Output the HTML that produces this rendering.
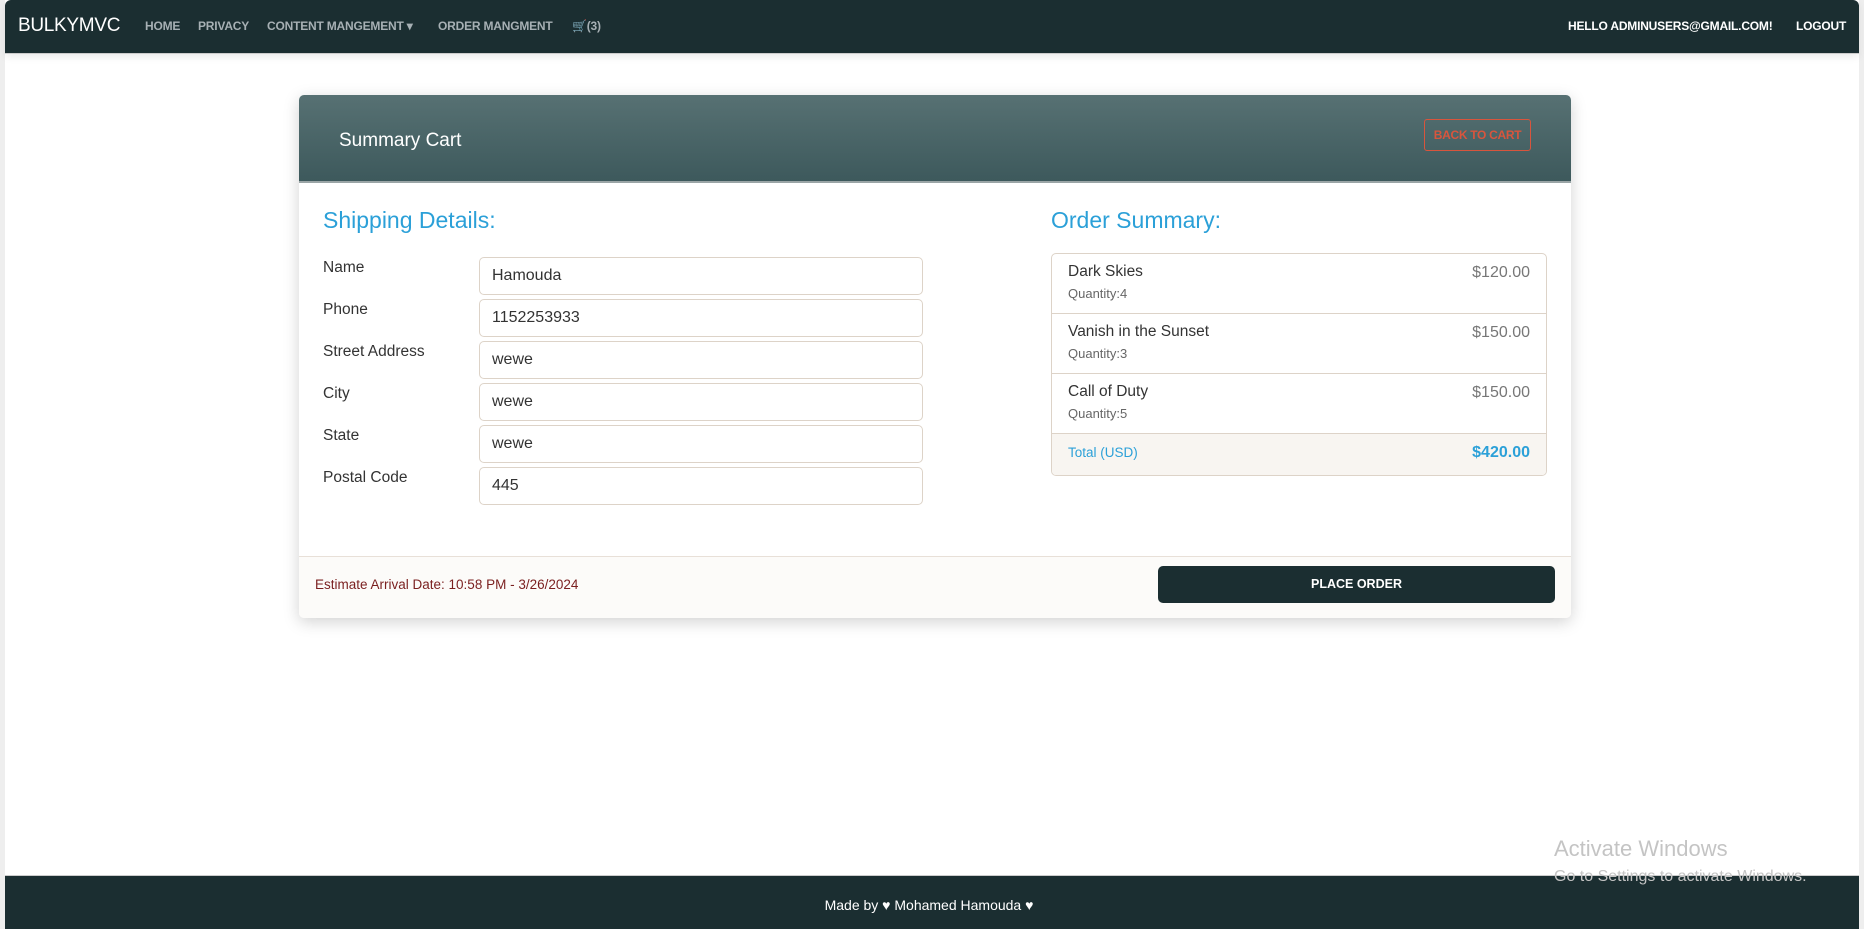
<!DOCTYPE html>
<html><head><meta charset="utf-8"><style>
*{box-sizing:border-box;margin:0;padding:0}
body{width:1864px;height:929px;background:#fff;font-family:"Liberation Sans",sans-serif;position:relative;overflow:hidden}
.edge{position:absolute;top:0;bottom:0;width:5px;background:#eee}
nav{position:absolute;left:5px;right:5px;top:0;height:54px;background:#1b2e31;border-radius:6px 6px 0 0;border-bottom:1px solid #ccc;box-shadow:0 3px 8px rgba(0,0,0,.08)}
nav span{position:absolute;top:19px;font-size:12px;font-weight:bold;color:#a7b0b4;white-space:nowrap;letter-spacing:-0.2px}
.brand{position:absolute;left:13px;top:15px;font-size:19px;color:#fff;letter-spacing:-0.3px}
.card{position:absolute;left:299px;top:95px;width:1272px;height:523px;background:#fff;border-radius:5px;box-shadow:0 4px 16px rgba(0,0,0,.18);overflow:hidden}
.hd{height:88px;background:linear-gradient(#577173,#3d595c);border-bottom:2px solid #9aa5a6;position:relative}
.hd .t{position:absolute;left:40px;top:35px;color:#fff;font-size:19px}
.btn{position:absolute;left:1125px;top:24px;width:107px;height:32px;border:1px solid #d8553d;border-radius:3px;color:#d8553d;font-size:12px;font-weight:bold;letter-spacing:-0.3px;text-align:center;line-height:30px}
h2{position:absolute;font-weight:normal;color:#2ba0d8;font-size:23px}
.lbl{position:absolute;left:24px;font-size:15.5px;color:#333}
.in{position:absolute;left:180px;width:444px;height:38px;border:1px solid #ddd3c8;border-radius:5px;padding:0 12px;line-height:36px;font-size:16px;color:#333}
.list{position:absolute;left:752px;top:158px;width:496px;border:1px solid #ddd3c8;border-radius:5px;overflow:hidden}
.row{height:60px;border-bottom:1px solid #ddd3c8;position:relative}
.row .n{position:absolute;left:16px;top:9px;font-size:15.5px;color:#333}
.row .q{position:absolute;left:16px;top:32px;font-size:13px;color:#666}
.row .p{position:absolute;right:16px;top:10px;font-size:16px;color:#777}
.tot{height:41px;background:#f8f5f1;position:relative}
.ft{position:absolute;left:0;right:0;top:461px;height:62px;border-top:1px solid #e8e0d8;background:#fcfbf9}
.place{position:absolute;left:859px;top:9px;width:397px;height:37px;background:#1b2e31;border-radius:5px;color:#fff;font-weight:bold;font-size:12.5px;text-align:center;line-height:37px}
footer{position:absolute;left:5px;right:5px;top:875px;height:54px;background:#1b2e31;border-top:1px solid #ccc;color:#fff;text-align:center;font-size:14px;line-height:58px;padding-right:6px}
</style></head><body>
<div class="edge" style="left:0"></div><div class="edge" style="right:0"></div>
<nav>
<div class="brand">BULKYMVC</div>
<span style="left:140px">HOME</span>
<span style="left:193px">PRIVACY</span>
<span style="left:262px">CONTENT MANGEMENT ▾</span>
<span style="left:433px">ORDER MANGMENT</span>
<span style="left:567px">🛒(3)</span>
<span style="left:1563px;color:#fff">HELLO ADMINUSERS@GMAIL.COM!</span>
<span style="left:1791px;color:#fff">LOGOUT</span>
</nav>
<div class="card">
<div class="hd"><div class="t">Summary Cart</div><div class="btn">BACK TO CART</div></div>
<h2 style="left:24px;top:112px">Shipping Details:</h2>
<h2 style="left:752px;top:112px">Order Summary:</h2>
<div class="lbl" style="top:164px">Name</div><div class="in" style="top:162px">Hamouda</div>
<div class="lbl" style="top:206px">Phone</div><div class="in" style="top:204px">1152253933</div>
<div class="lbl" style="top:248px">Street Address</div><div class="in" style="top:246px">wewe</div>
<div class="lbl" style="top:290px">City</div><div class="in" style="top:288px">wewe</div>
<div class="lbl" style="top:332px">State</div><div class="in" style="top:330px">wewe</div>
<div class="lbl" style="top:374px">Postal Code</div><div class="in" style="top:372px">445</div>
<div class="list">
<div class="row"><div class="n">Dark Skies</div><div class="q">Quantity:4</div><div class="p">$120.00</div></div>
<div class="row"><div class="n">Vanish in the Sunset</div><div class="q">Quantity:3</div><div class="p">$150.00</div></div>
<div class="row"><div class="n">Call of Duty</div><div class="q">Quantity:5</div><div class="p">$150.00</div></div>
<div class="tot"><div style="position:absolute;left:16px;top:11px;font-size:13.5px;color:#2ba0d8">Total (USD)</div><div style="position:absolute;right:16px;top:10px;font-size:16px;font-weight:bold;color:#2ba0d8">$420.00</div></div>
</div>
<div class="ft"><div style="position:absolute;left:16px;top:20px;font-size:13.5px;color:#7a1f1f">Estimate Arrival Date: 10:58 PM - 3/26/2024</div><div class="place">PLACE ORDER</div></div>
</div>
<div style="position:absolute;left:1554px;top:836px;font-size:22px;color:#c4c4c4">Activate Windows</div>
<div style="position:absolute;left:1554px;top:868px;font-size:16px;color:#c4c4c4;z-index:2">Go to Settings to activate Windows.</div>
<footer>Made by ♥ Mohamed Hamouda ♥</footer>
</body></html>
